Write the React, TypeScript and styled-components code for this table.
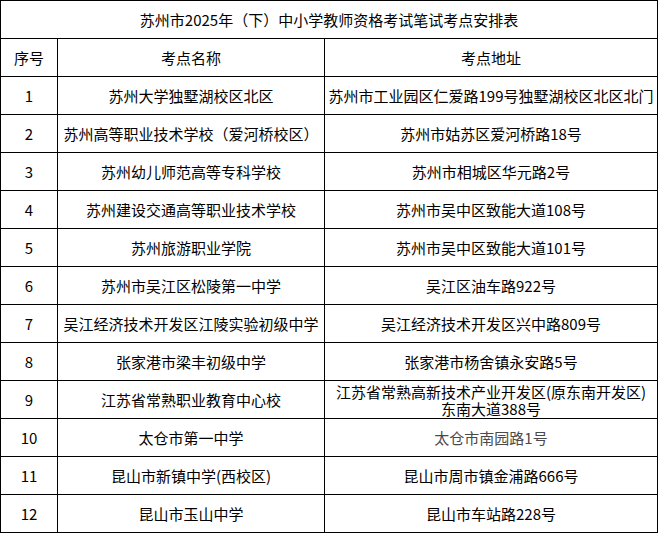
import { Fragment } from "react";
import styled, { createGlobalStyle } from "styled-components";

const GlobalStyle = createGlobalStyle`
  html, body {
    margin: 0;
    padding: 0;
    background: #ffffff;
  }
  body {
    font-family: "Noto Sans CJK SC", "DejaVu Sans", sans-serif;
    color: #000000;
  }
`;

interface Site {
  no: number;
  name: string;
  address: string[];
  muted?: boolean;
}

const sites: Site[] = [
  { no: 1, name: "苏州大学独墅湖校区北区", address: ["苏州市工业园区仁爱路199号独墅湖校区北区北门"] },
  { no: 2, name: "苏州高等职业技术学校（爱河桥校区）", address: ["苏州市姑苏区爱河桥路18号"] },
  { no: 3, name: "苏州幼儿师范高等专科学校", address: ["苏州市相城区华元路2号"] },
  { no: 4, name: "苏州建设交通高等职业技术学校", address: ["苏州市吴中区致能大道108号"] },
  { no: 5, name: "苏州旅游职业学院", address: ["苏州市吴中区致能大道101号"] },
  { no: 6, name: "苏州市吴江区松陵第一中学", address: ["吴江区油车路922号"] },
  { no: 7, name: "吴江经济技术开发区江陵实验初级中学", address: ["吴江经济技术开发区兴中路809号"] },
  { no: 8, name: "张家港市梁丰初级中学", address: ["张家港市杨舍镇永安路5号"] },
  {
    no: 9,
    name: "江苏省常熟职业教育中心校",
    address: ["江苏省常熟高新技术产业开发区(原东南开发区)", "东南大道388号"],
  },
  { no: 10, name: "太仓市第一中学", address: ["太仓市南园路1号"], muted: true },
  { no: 11, name: "昆山市新镇中学(西校区)", address: ["昆山市周市镇金浦路666号"] },
  { no: 12, name: "昆山市玉山中学", address: ["昆山市车站路228号"] },
];

// black background + 1px gaps draws the grid lines
const Sheet = styled.div`
  display: grid;
  grid-template-columns: 56px 266px 332px;
  grid-auto-rows: 37px;
  gap: 1px;
  padding: 1px;
  width: max-content;
  background: #000000;
`;

const Cell = styled.div<{ $muted?: boolean; $span?: boolean }>`
  display: flex;
  flex-direction: column;
  align-items: center;
  justify-content: center;
  background: #ffffff;
  color: ${(p) => (p.$muted ? "#4a4a4a" : "#000000")};
  font-size: 15px;
  line-height: 18px;
  text-align: center;
  white-space: nowrap;
  grid-column: ${(p) => (p.$span ? "1 / -1" : "auto")};
`;

const Line = styled.span`
  display: block;
  height: 17px;
  line-height: 17px;
`;

export default function App() {
  return (
    <>
      <GlobalStyle />
      <Sheet>
        <Cell $span>苏州市2025年（下）中小学教师资格考试笔试考点安排表</Cell>
        <Cell>序号</Cell>
        <Cell>考点名称</Cell>
        <Cell>考点地址</Cell>
        {sites.map((s) => (
          <Fragment key={s.no}>
            <Cell>{s.no}</Cell>
            <Cell>{s.name}</Cell>
            <Cell $muted={s.muted}>
              {s.address.map((l) => (
                <Line key={l}>{l}</Line>
              ))}
            </Cell>
          </Fragment>
        ))}
      </Sheet>
    </>
  );
}
